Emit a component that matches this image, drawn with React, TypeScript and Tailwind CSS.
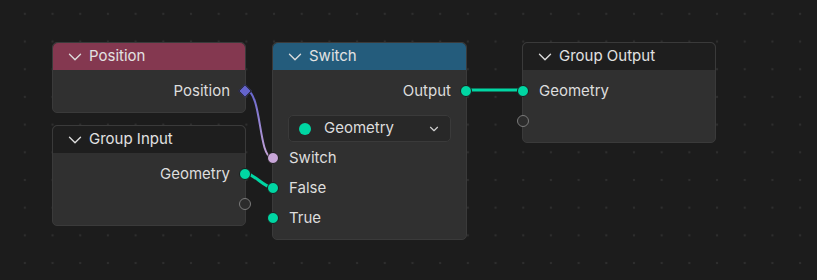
import React from 'react';
import { ChevronDown } from 'lucide-react';

// Socket colours used by the node editor
const TEAL = '#00d6a3';
const PINK = '#c8a6d8';
const PURPLE = '#6464cc';

type SocketKind = 'geo' | 'bool' | 'vec' | 'empty';

const Socket = ({ kind, side }: { kind: SocketKind; side: 'left' | 'right' }) => {
  const pos = side === 'left' ? 'left-[-6px]' : 'right-[-6px]';
  if (kind === 'vec') {
    return (
      <span
        className={`absolute ${pos} top-1/2 -translate-y-1/2 w-[12px] h-[12px] flex items-center justify-center`}
      >
        <span className="shrink-0 w-[10px] h-[10px] rotate-45 bg-[#6464cc] border border-[#1c1c1c]" />
      </span>
    );
  }
  if (kind === 'empty') {
    return (
      <span
        className={`absolute ${pos} top-1/2 -translate-y-1/2 w-[12px] h-[12px] rounded-full border-[1.5px] border-[#7a7a7a] bg-[#2c2c2c]`}
      />
    );
  }
  return (
    <span
      className={`absolute ${pos} top-1/2 -translate-y-1/2 w-[12px] h-[12px] rounded-full border border-[#1c1c1c] ${
        kind === 'geo' ? 'bg-[#00d6a3]' : 'bg-[#c8a6d8]'
      }`}
    />
  );
};

const Row = ({
  label,
  side,
  kind,
}: {
  label?: string;
  side: 'left' | 'right';
  kind: SocketKind;
}) => (
  <div
    className={`relative h-[30px] flex items-center ${
      side === 'right' ? 'justify-end pr-[15px]' : 'justify-start pl-[16px]'
    }`}
  >
    {label && <span>{label}</span>}
    <Socket kind={kind} side={side} />
  </div>
);

const Header = ({ title, color }: { title: string; color: string }) => (
  <div className={`h-[27px] flex items-center pl-[11px] gap-[3px] rounded-t-[5px] ${color}`}>
    <ChevronDown size={22} strokeWidth={1.5} className="text-[#dcdcdc]" />
    <span className="text-[#e2e2e2]">{title}</span>
  </div>
);

const App = () => {
  return (
    <div
      className="relative w-[817px] h-[280px] overflow-hidden bg-[#1c1c1c] text-[15px] text-[#dddddd]
      bg-[radial-gradient(circle,#2e2e2e_1px,transparent_1.6px)] bg-[length:27.7px_27.7px] bg-[position:11px_0px]"
      style={{ fontFamily: 'Inter, "Noto Sans", sans-serif' }}
    >
      {/* Links */}
      <svg className="absolute inset-0" width={817} height={280}>
        <defs>
          <linearGradient id="posLink" x1="0" y1="0" x2="0" y2="1">
            <stop offset="0" stopColor={PURPLE} />
            <stop offset="1" stopColor={PINK} />
          </linearGradient>
        </defs>
        <path d="M246 90 C 262 92, 258 156, 272 158" stroke="url(#posLink)" strokeWidth={2} fill="none" />
        <path d="M246 173 C 256 176, 262 185, 272 188" stroke={TEAL} strokeWidth={3} fill="none" />
        <path d="M467 90 L 522 90" stroke={TEAL} strokeWidth={3} fill="none" />
      </svg>

      {/* Position */}
      <div className="absolute left-[52px] top-[42px] w-[194px] rounded-[5px] border border-[#3a3a3a] bg-[#303030]">
        <Header title="Position" color="bg-[#843850]" />
        <div className="pt-[6px] pb-[6px]">
          <Row label="Position" side="right" kind="vec" />
        </div>
      </div>

      {/* Group Input */}
      <div className="absolute left-[52px] top-[125px] w-[194px] rounded-[5px] border border-[#3a3a3a] bg-[#303030]">
        <Header title="Group Input" color="bg-[#1e1e1e]" />
        <div className="pt-[6px] pb-[6px]">
          <Row label="Geometry" side="right" kind="geo" />
          <Row side="right" kind="empty" />
        </div>
      </div>

      {/* Switch */}
      <div className="absolute left-[272px] top-[42px] w-[195px] rounded-[5px] border border-[#3a3a3a] bg-[#303030]">
        <Header title="Switch" color="bg-[#245c7c]" />
        <div className="pt-[6px] pb-[6px]">
          <Row label="Output" side="right" kind="geo" />
          <div className="px-[15px] pt-[9px] pb-[1px]">
            <div className="h-[27px] flex items-center rounded-[5px] border border-[#3a3a3a] bg-[#282828] pl-[10px] pr-[9px]">
              <span className="w-[12px] h-[12px] rounded-full bg-[#00d6a3]" />
              <span className="ml-[13px] flex-1">Geometry</span>
              <ChevronDown size={14} strokeWidth={2} className="text-[#cfcfcf]" />
            </div>
          </div>
          <Row label="Switch" side="left" kind="bool" />
          <Row label="False" side="left" kind="geo" />
          <Row label="True" side="left" kind="geo" />
        </div>
      </div>

      {/* Group Output */}
      <div className="absolute left-[522px] top-[42px] w-[194px] rounded-[5px] border border-[#3a3a3a] bg-[#303030]">
        <Header title="Group Output" color="bg-[#1e1e1e]" />
        <div className="pt-[6px] pb-[6px]">
          <Row label="Geometry" side="left" kind="geo" />
          <Row side="left" kind="empty" />
        </div>
      </div>
    </div>
  );
};

export default App;
